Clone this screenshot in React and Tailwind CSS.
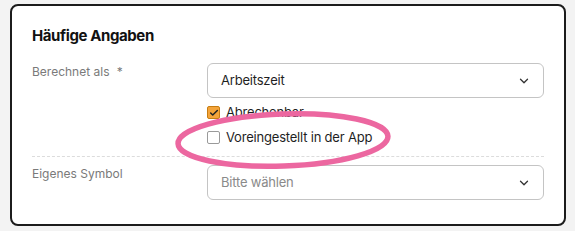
import { ChevronDown, Check } from "lucide-react";

function Select({ value, placeholder }) {
  return (
    <div className="flex h-[35px] items-center justify-between rounded-md border border-[#c4c4c4] bg-white pl-[13px] pr-[12px]">
      <span className={value ? "text-[13px] tracking-[-0.2px] text-[#1f1f1f]" : "text-[13px] tracking-[-0.2px] text-[#8a8a8a]"}>
        {value || placeholder}
      </span>
      <ChevronDown size={14} strokeWidth={2.2} className="text-[#333]" />
    </div>
  );
}

export default function App() {
  return (
    <div className="h-[231px] w-[575px] bg-[#f3f3f3] pl-[10px] pt-[4px]" style={{ fontFamily: "Inter, 'Noto Sans', sans-serif" }}>
      <div className="relative h-[222px] w-[556px] rounded-lg border-2 border-[#1c1c1c] bg-white px-5 pt-[20px]">
        <h2 className="text-[15px] font-bold leading-[20px] tracking-[-0.4px] text-[#111]">Häufige Angaben</h2>

        {/* Berechnet als */}
        <div className="mt-[17px] grid grid-cols-[175px_1fr]">
          <div className="text-[12px] leading-[18px] text-[#7a7a7a]">
            Berechnet als <span className="ml-1">*</span>
          </div>
          <div>
            <Select value="Arbeitszeit" />
            <div className="mt-[8px] flex flex-col gap-[12px]">
              <label className="flex items-center gap-[6px] text-[13px] leading-[13px] tracking-[-0.2px] text-[#1f1f1f]">
                <span className="flex h-[13px] w-[13px] items-center justify-center rounded-[2px] border border-[#c77d12] bg-[#f4a43a]">
                  <Check size={10} strokeWidth={3.5} className="text-[#222]" />
                </span>
                Abrechenbar
              </label>
              <label className="flex items-center gap-[6px] text-[13px] leading-[13px] tracking-[-0.2px] text-[#1f1f1f]">
                <span className="h-[13px] w-[13px] rounded-[2px] border border-[#9a9a9a] bg-white" />
                Voreingestellt in der App
              </label>
            </div>
          </div>
        </div>

        <div className="mt-[12px] border-t border-dashed border-[#dcdcdc]" />

        {/* Eigenes Symbol */}
        <div className="mt-[8px] grid grid-cols-[175px_1fr]">
          <div className="text-[12px] leading-[18px] text-[#7a7a7a]">Eigenes Symbol</div>
          <Select placeholder="Bitte wählen" />
        </div>

        {/* annotation */}
        <svg className="pointer-events-none absolute left-0 top-0" width="552" height="218">
          <ellipse cx="271" cy="134" rx="105" ry="26" fill="none" stroke="#ec67a0" strokeWidth="5.5" transform="rotate(-2 271 134)" />
        </svg>
      </div>
    </div>
  );
}
